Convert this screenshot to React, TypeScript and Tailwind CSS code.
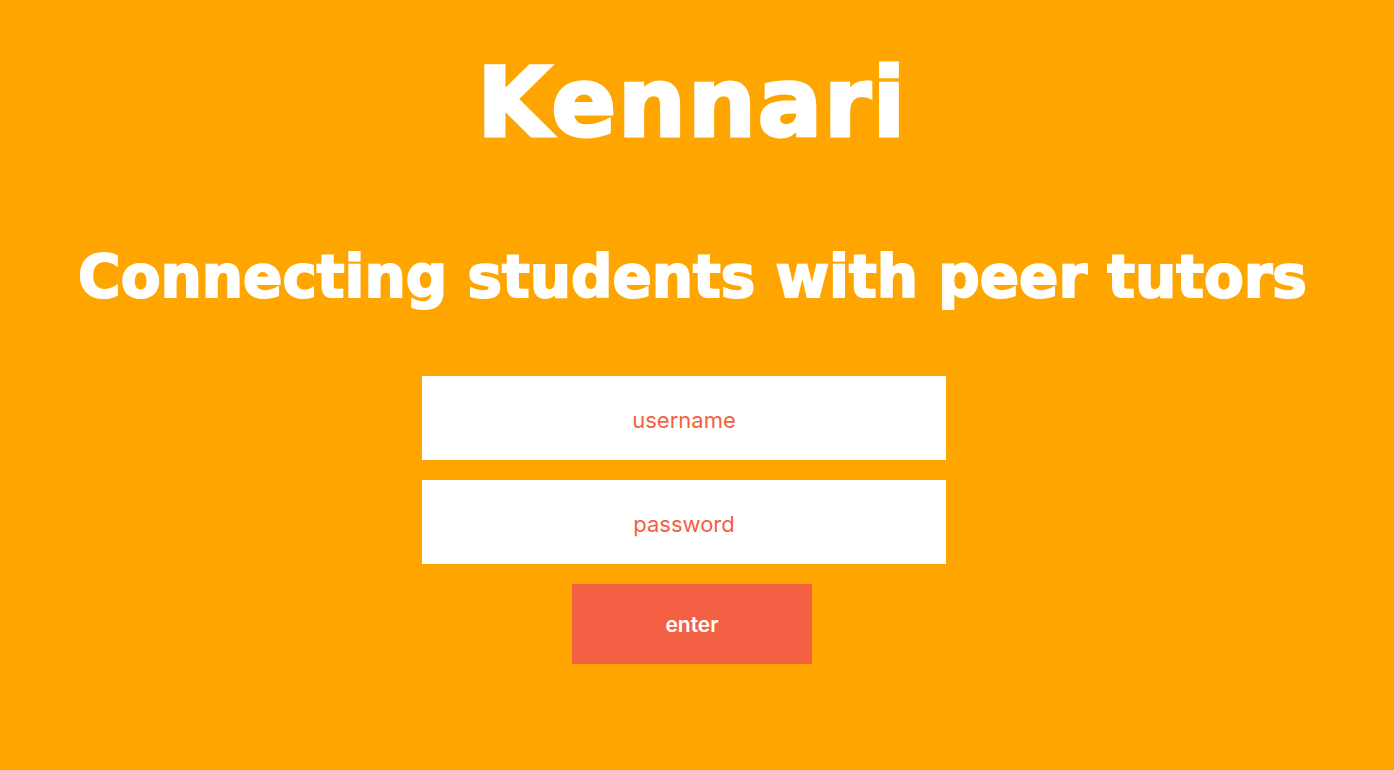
import React from "react";

export default function App() {
  return (
    <div className="min-h-[770px] w-full bg-[#FFA500] flex flex-col items-center">
      <h1 className="mt-[43px] ml-[-10px] font-['DejaVu_Sans',Arial,sans-serif] text-[96px] leading-[120px] font-bold text-white tracking-[1.5px] [-webkit-text-stroke:3px_white]">
        Kennari
      </h1>
      <h2 className="mt-[78px] ml-[-9px] font-['DejaVu_Sans',Arial,sans-serif] text-[58px] leading-[72px] font-bold text-white [-webkit-text-stroke:2px_white]">
        Connecting students with peer tutors
      </h2>
      <div className="mt-[63px] ml-[-26px] flex flex-col items-center gap-[20px] font-['Inter','Open_Sans',sans-serif]">
        <input
          type="text"
          placeholder="username"
          className="w-[524px] h-[84px] pt-[3px] bg-white text-center text-[22px] text-[#F46043] placeholder:text-[#F46043] outline-none"
        />
        <input
          type="password"
          placeholder="password"
          className="w-[524px] h-[84px] pt-[3px] bg-white text-center text-[22px] text-[#F46043] placeholder:text-[#F46043] outline-none"
        />
        <button className="ml-[16px] w-[240px] h-[80px] pt-[1px] bg-[#F46043] text-white text-[21px] font-semibold">
          enter
        </button>
      </div>
    </div>
  );
}
